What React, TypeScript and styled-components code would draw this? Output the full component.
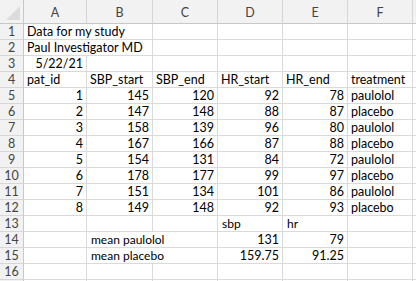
import React from 'react';
import styled, { createGlobalStyle } from 'styled-components';

const Global = createGlobalStyle`
  html, body {
    margin: 0;
    padding: 0;
    background: #ffffff;
    overflow: hidden;
  }
`;

const COLS = ['A', 'B', 'C', 'D', 'E', 'F'];
const VISIBLE_ROWS = 16;

const Sheet = styled.div`
  display: grid;
  grid-template-columns: 24px 63px 66px 65px 65px 65px 65px 1fr;
  grid-template-rows: 24px repeat(17, 16px);
  width: 416px;
  height: 281px;
  overflow: hidden;
  font-family: 'Lato', 'Liberation Sans', sans-serif;
  font-size: 12.5px;
  color: #000;
`;

const Corner = styled.div`
  position: relative;
  background: #f2f2f2;
  border-right: 1px solid #c8c8c8;
  border-bottom: 1px solid #c8c8c8;
  box-sizing: border-box;
  &::after {
    content: '';
    position: absolute;
    right: 3px;
    bottom: 3px;
    width: 0;
    height: 0;
    border-left: 14px solid transparent;
    border-bottom: 14px solid #dcdcdc;
  }
`;

const ColHead = styled.div`
  display: flex;
  align-items: center;
  justify-content: center;
  background: #f2f2f2;
  border-right: 1px solid #d6d6d6;
  border-bottom: 1px solid #c8c8c8;
  box-sizing: border-box;
  color: #444;
  font-size: 12.5px;
  padding-top: 2px;
`;

const RowHead = styled.div`
  display: flex;
  align-items: center;
  justify-content: center;
  background: #f2f2f2;
  border-right: 1px solid #c8c8c8;
  border-bottom: 1px solid #d6d6d6;
  box-sizing: border-box;
  color: #444;
  font-size: 12.5px;
`;

const Cell = styled.div<{ $align?: 'left' | 'right'; $span?: number; $small?: boolean }>`
  display: flex;
  align-items: center;
  justify-content: ${p => (p.$align === 'right' ? 'flex-end' : 'flex-start')};
  grid-column: span ${p => p.$span || 1};
  padding: 0 ${p => (p.$small ? '4px' : '3px')};
  border-right: 1px solid #dadada;
  border-bottom: 1px solid #dadada;
  box-sizing: border-box;
  white-space: nowrap;
  overflow: hidden;
  font-size: ${p => (p.$small ? '12px' : '12.5px')};
`;

type C = { v?: string | number; span?: number; small?: boolean; left?: boolean };

const data: C[][] = [
  [{ v: 'Data for my study', span: 2 }, {}, {}, {}, {}],
  [{ v: 'Paul Investigator MD', span: 2 }, {}, {}, {}, {}],
  [{ v: '5/22/21' }, {}, {}, {}, {}, {}],
  [
    { v: 'pat_id', left: true },
    { v: 'SBP_start', left: true },
    { v: 'SBP_end', left: true },
    { v: 'HR_start', left: true },
    { v: 'HR_end', left: true },
    { v: 'treatment', left: true },
  ],
  ...[
    [1, 145, 120, 92, 78, 'paulolol'],
    [2, 147, 148, 88, 87, 'placebo'],
    [3, 158, 139, 96, 80, 'paulolol'],
    [4, 167, 166, 87, 88, 'placebo'],
    [5, 154, 131, 84, 72, 'paulolol'],
    [6, 178, 177, 99, 97, 'placebo'],
    [7, 151, 134, 101, 86, 'paulolol'],
    [8, 149, 148, 92, 93, 'placebo'],
  ].map(r => r.map(v => ({ v }))),
  [{}, {}, {}, { v: 'sbp', small: true, left: true }, { v: 'hr', small: true, left: true }, {}],
  [{}, { v: 'mean paulolol', span: 2, small: true, left: true }, { v: 131 }, { v: 79 }, {}],
  [{}, { v: 'mean placebo', span: 2, small: true, left: true }, { v: 159.75 }, { v: 91.25 }, {}],
  [{}, {}, {}, {}, {}, {}],
  [{}, {}, {}, {}, {}, {}],
];

const isRight = (c: C) => !c.left && (typeof c.v === 'number' || c.v === '5/22/21');

const App = () => {
  return (
    <>
      <Global />
      <Sheet>
        <Corner />
        {COLS.map(c => (
          <ColHead key={c}>{c}</ColHead>
        ))}
        <ColHead />
        {data.map((row, i) => (
          <React.Fragment key={i}>
            <RowHead>{i < VISIBLE_ROWS ? i + 1 : ''}</RowHead>
            {row.map((c, j) => (
              <Cell key={j} $span={c.span} $small={c.small} $align={isRight(c) ? 'right' : 'left'}>
                {c.v}
              </Cell>
            ))}
            <Cell />
          </React.Fragment>
        ))}
      </Sheet>
    </>
  );
};

export default App;
